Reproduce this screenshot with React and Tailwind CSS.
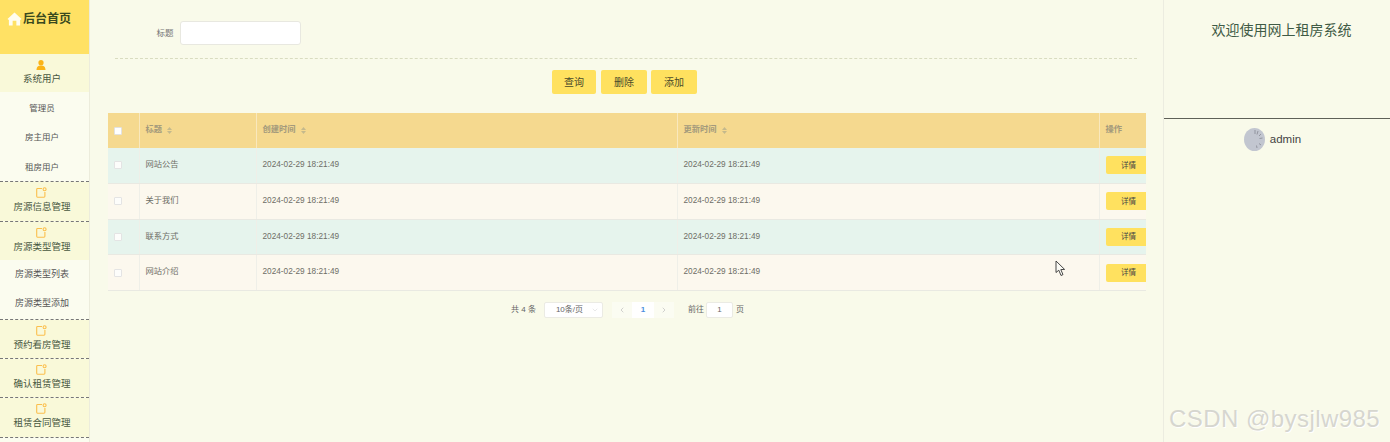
import { ChevronDown, ChevronLeft, ChevronRight } from 'lucide-react'

const FONT = "font-['Liberation_Sans','Noto_Sans_CJK_SC',sans-serif]"

function HomeIcon() {
  return (
    <svg width="15" height="14" viewBox="0 0 16 15" className="shrink-0">
      <path d="M8 0.5 L15.5 7.5 L14 8.5 L14 14.5 L10 14.5 L10 9.5 L6 9.5 L6 14.5 L2 14.5 L2 8.5 L0.5 7.5 Z" fill="#fffdf0" />
    </svg>
  )
}

function UserIcon() {
  return (
    <svg width="10" height="10" viewBox="0 0 10 10">
      <circle cx="5" cy="2.7" r="2.6" fill="#fbb417" />
      <path d="M0.5 10 C0.5 6.5 2.5 5.4 5 5.4 C7.5 5.4 9.5 6.5 9.5 10 Z" fill="#fbb417" />
    </svg>
  )
}

function NoteIcon() {
  return (
    <svg width="11" height="11" viewBox="0 0 11 11" fill="none" stroke="#fbbf4d" strokeWidth="1.1">
      <path d="M6 1.5 H1.5 Q0.7 1.5 0.7 2.3 V9.3 Q0.7 10.2 1.5 10.2 H8 Q8.9 10.2 8.9 9.3 V5" />
      <circle cx="8.6" cy="2.2" r="1.5" />
    </svg>
  )
}

function MenuHead({ label, user }) {
  return (
    <div className="h-[38.3px] bg-[#f9f9d9] flex flex-col items-center pt-[5px] pr-[5px]">
      <div className="h-[11px] flex items-center pr-[2px]">{user ? <UserIcon /> : <NoteIcon />}</div>
      <span className="mt-[1px] text-[9.5px] leading-[16px] text-[#47573f]">{label}</span>
    </div>
  )
}

function SubItem({ label, small }) {
  return (
    <div className={`h-[29.5px] flex items-center justify-center pr-[5px] text-[#555] ${small ? 'text-[8.5px]' : 'text-[9px]'}`}>
      {label}
    </div>
  )
}

function Divider() {
  return <div className="border-t border-dashed border-[#777] h-0" />
}

function SortMark() {
  return (
    <svg width="5" height="7" viewBox="0 0 5 7" className="ml-[5px]">
      <path d="M2.5 0 L5 3 H0 Z" fill="#c4b98c" />
      <path d="M2.5 7 L5 4 H0 Z" fill="#c4b98c" />
    </svg>
  )
}

function Check({ head }) {
  return <span className={`block w-[8px] h-[8px] rounded-[1px] ${head ? 'bg-white border border-[#e2e2e2]' : 'bg-[#fdfdfb] border border-[#e4e4e4]'}`} />
}

const rows = [
  { title: '网站公告', bg: 'bg-[#e6f4ed]' },
  { title: '关于我们', bg: 'bg-[#fcf8ee]' },
  { title: '联系方式', bg: 'bg-[#e6f4ed]' },
  { title: '网站介绍', bg: 'bg-[#fcf8ee]' },
]

const cols = 'grid grid-cols-[31px_117px_421px_422px_47px]'

function ActionButton({ label, className }) {
  return (
    <button type="button" className={`h-[24px] rounded-[2px] bg-[#ffe15f] text-[10px] text-[#4a4a2a] ${className}`}>
      {label}
    </button>
  )
}

export default function App() {
  return (
    <div className={`relative w-[1390px] h-[442px] overflow-hidden flex bg-[#f9faea] ${FONT}`}>
      {/* left menu */}
      <aside className="w-[90px] shrink-0 h-full border-r border-[#ececdc] bg-[#fbfcef] overflow-hidden">
        <div className="h-[54px] bg-[#ffe164] flex items-start gap-px pl-[7px] pt-[12px]">
          <HomeIcon />
          <span className="text-[12px] font-bold leading-[15px] text-[#3a4a1e]">后台首页</span>
        </div>
        <MenuHead label="系统用户" user />
        <div className="h-[89px] pt-[1px]">
          <SubItem label="管理员" small />
          <SubItem label="房主用户" small />
          <SubItem label="租房用户" small />
        </div>
        <Divider />
        <MenuHead label="房源信息管理" />
        <Divider />
        <MenuHead label="房源类型管理" />
        <SubItem label="房源类型列表" />
        <SubItem label="房源类型添加" />
        <Divider />
        <MenuHead label="预约看房管理" />
        <Divider />
        <MenuHead label="确认租赁管理" />
        <Divider />
        <MenuHead label="租赁合同管理" />
        <Divider />
      </aside>

      {/* main content */}
      <main className="w-[1073px] shrink-0 h-full pl-[18px] pt-[21px]">
        <div className="flex items-center h-[24px] pl-[45px]">
          <span className="text-[8.5px] text-[#777] w-[24px] text-center">标题</span>
          <div className="ml-[3px] w-[121px] h-[24px] bg-white border border-[#e8e8e0] rounded-[3px]" />
        </div>
        <div className="mt-[13px] ml-[7px] w-[1022px] border-t border-dashed border-[#d9dcc0]" />
        <div className="mt-[11px] flex w-[1038px] pl-[444px] h-[24px]">
          <ActionButton label="查询" className="w-[44px]" />
          <ActionButton label="删除" className="w-[46px] ml-[5px]" />
          <ActionButton label="添加" className="w-[46px] ml-[4px]" />
        </div>

        <div className="mt-[19px] w-[1038px] overflow-hidden">
          <div className={`${cols} h-[35px] bg-[#f5d98f] text-[8.25px] text-[#a39a7c] font-bold`}>
            <div className="flex items-center pl-[6px]"><Check head /></div>
            <div className="flex items-center pl-[5.5px] border-l border-[#f9e8bd]">标题<SortMark /></div>
            <div className="flex items-center pl-[5.5px] border-l border-[#f9e8bd]">创建时间<SortMark /></div>
            <div className="flex items-center pl-[5.5px] border-l border-[#f9e8bd]">更新时间<SortMark /></div>
            <div className="flex items-center pl-[5.5px] border-l border-[#f9e8bd]">操作</div>
          </div>
          {rows.map(row => (
            <div key={row.title} className={`${cols} h-[35.75px] ${row.bg} text-[8.25px] text-[#6e6e66] border-b border-[#e9e9e2]`}>
              <div className="flex items-center pl-[6px]"><Check /></div>
              <div className="flex items-center pl-[5.5px] border-l border-[#efefe8]">{row.title}</div>
              <div className="flex items-center pl-[5.5px] border-l border-[#efefe8]">2024-02-29 18:21:49</div>
              <div className="flex items-center pl-[5.5px] border-l border-[#efefe8]">2024-02-29 18:21:49</div>
              <div className="flex items-center pl-[6px] border-l border-[#efefe8]">
                <div className="w-[46px] shrink-0 h-[18px] bg-[#ffe15f] rounded-[2px] flex items-center pl-[15px] text-[7.5px] text-[#444]">详情</div>
              </div>
            </div>
          ))}
        </div>

        {/* pagination */}
        <div className="mt-[11px] w-[1038px] h-[16px] flex items-center text-[8px] text-[#666] pl-[403px]">
          <span>共 4 条</span>
          <div className="ml-[8px] w-[59px] h-[16px] bg-white border border-[#ebebe4] rounded-[2px] flex items-center justify-between pl-[11px] pr-[3px]">
            <span>10条/页</span>
            <ChevronDown size={8} strokeWidth={1} className="text-[#bbb]" />
          </div>
          <div className="ml-[9px] flex h-[16px]">
            <div className="w-[20px] bg-[#fbfcf2] flex items-center justify-center"><ChevronLeft size={8} className="text-[#bbb]" /></div>
            <div className="w-[22px] bg-white flex items-center justify-center text-[#4b8fe0] font-bold">1</div>
            <div className="w-[20px] bg-[#fbfcf2] flex items-center justify-center"><ChevronRight size={8} className="text-[#bbb]" /></div>
          </div>
          <span className="ml-[14px]">前往</span>
          <div className="ml-[2px] w-[27px] h-[16px] bg-white border border-[#ebebe4] rounded-[2px] flex items-center justify-center">1</div>
          <span className="ml-[3px]">页</span>
        </div>
      </main>

      {/* right panel */}
      <aside className="flex-1 h-full border-l border-[#ecece0]">
        <div className="h-[118px] pt-[21px] pl-[9px] text-center text-[14px] leading-[18px] text-[#3f5a45]">欢迎使用网上租房系统</div>
        <div className="border-t border-[#5f6058]" />
        <div className="flex items-center justify-center gap-[5px] mt-[9px] pr-[9px]">
          <svg width="21" height="23" viewBox="0 0 21 23">
            <ellipse cx="10.5" cy="11.5" rx="10.5" ry="11.5" fill="#c2c6d0" />
            <g stroke="#8d909a" strokeWidth="0.9">
              <path d="M11 2 L11 6" />
              <path d="M14 3 L13 6.5" />
              <path d="M17 6 L15 8" />
              <path d="M18.5 10 L15.5 10.5" />
              <path d="M17 17 L15 15.5" />
              <path d="M13 20 L12.5 17.5" />
            </g>
          </svg>
          <span className="text-[11.5px] text-[#444]">admin</span>
        </div>
      </aside>

      {/* recording cursor */}
      <svg width="11" height="17" viewBox="0 0 11 17" className="absolute left-[1055px] top-[260px]">
        <path d="M1 1 L1 12.5 L3.8 10.2 L6 15.5 L8 14.6 L5.8 9.6 L9.6 9.4 Z" fill="#fbfbf5" stroke="#333" strokeWidth="0.9" />
      </svg>

      {/* watermark */}
      <span className="absolute left-[1169px] top-[405px] text-[24px] leading-[28px] tracking-[0.45px] text-[#d6d6cf] [text-shadow:1px_1px_0_#fff]">CSDN @bysjlw985</span>
    </div>
  )
}
